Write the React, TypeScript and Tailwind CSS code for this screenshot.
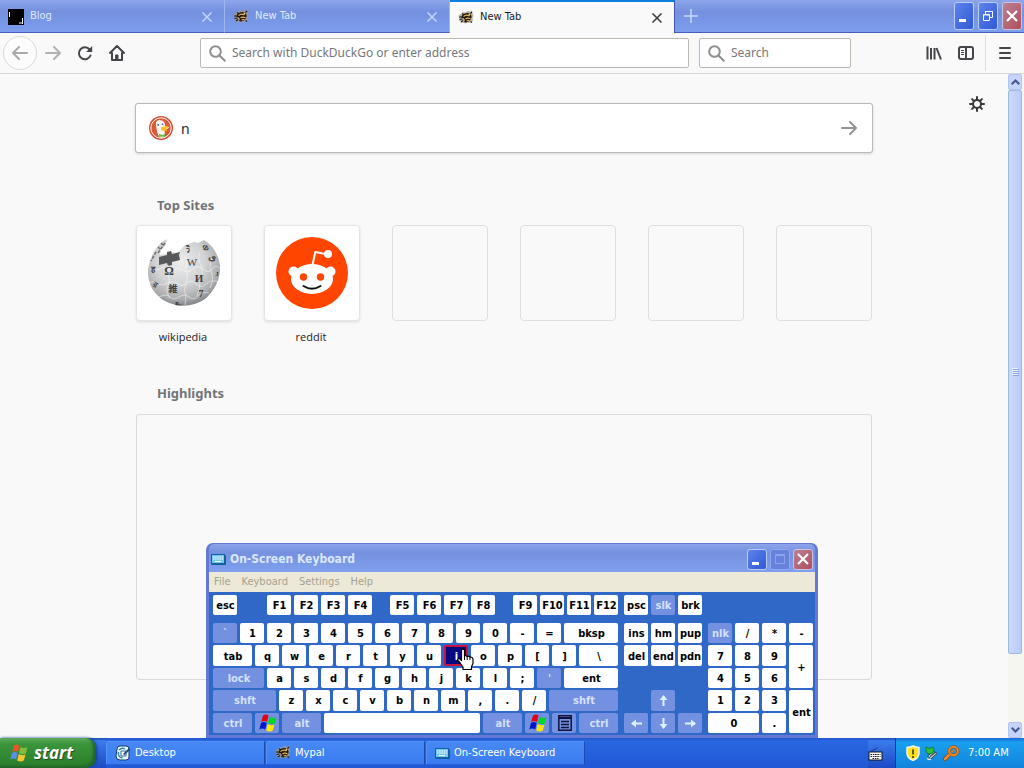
import React, { ReactNode } from "react";

const UI = "font-['DejaVu_Sans_Condensed','DejaVu_Sans',sans-serif]";

/* ---------- icons ---------- */

function BeeIcon() {
  return (
    <svg width="16" height="16" viewBox="0 0 16 16" className="shrink-0" aria-hidden="true">
      <path d="M.5 5l3-1 1-2 3 .5 2-1.500 3 .5 1.500-1 .5 3 1 2-1 3 .5 2.500-2 .5-1 1.500-2-.5-3 1-2-1-2.500.5.5-2-2-.5.5-2.500z" fill="#a39a88" opacity=".75" />
      <path d="M4 5.500q4-3.500 8-2 2.500 2.500 1 5.500-1.500 3-4.500 3.500L6 12q1.500-1.500.5-3-1-1.500-3-1z" fill="#21170c" />
      <path d="M5.500 6.500q3-2.500 6-.5M7.500 8.800q2.500-1.300 5 0M8.500 11q1.500-.8 3-.3" stroke="#e8b956" strokeWidth="1.200" fill="none" />
      <path d="M1 7h3M1.500 9.500l3-.5M3 12l2-1.500M4 3.500l2 1.500M12.500 11.500l1.500 1M12.500 3.500l1.500-1.500" stroke="#21170c" strokeWidth="1.100" />
      <circle cx="11.500" cy="4.500" r=".9" fill="#f2d58c" />
    </svg>
  );
}

function CloseX() {
  return (
    <svg width="10" height="10" viewBox="0 0 10 10" stroke="currentColor" strokeWidth="1.500" aria-hidden="true">
      <path d="M.5.5l9 9M9.500.5l-9 9" />
    </svg>
  );
}

function ArrowIcon({ flip = false }: { flip?: boolean }) {
  return (
    <svg width="16" height="14" viewBox="0 0 16 14" fill="none" stroke="currentColor" strokeWidth="2" strokeLinecap="round" strokeLinejoin="round" className={flip ? "rotate-180" : ""} aria-hidden="true">
      <path d="M1 7h14M9 1l6 6-6 6" />
    </svg>
  );
}

function ReloadIcon() {
  return (
    <svg width="16" height="16" viewBox="0 0 16 16" aria-hidden="true">
      <path d="M12.600 4.500A6 6 0 1 0 13.500 10.500" fill="none" stroke="#45454a" strokeWidth="2" strokeLinecap="round" />
      <path d="M15.200 1v6H9.200z" fill="#45454a" />
    </svg>
  );
}

function HomeIcon() {
  return (
    <svg width="16" height="16" viewBox="0 0 16 16" fill="none" stroke="#45454a" strokeWidth="2" strokeLinejoin="round" strokeLinecap="round" aria-hidden="true">
      <path d="M1 8l7-7 7 7M3 8v7h10V8" />
      <path d="M7 10h2v5H7z" fill="#45454a" strokeWidth="1" />
    </svg>
  );
}

function SearchIcon() {
  return (
    <svg width="17" height="17" viewBox="0 0 17 17" fill="none" stroke="#8f8f92" strokeWidth="2" strokeLinecap="round" className="shrink-0" aria-hidden="true">
      <circle cx="6.500" cy="6.500" r="5.300" />
      <path d="M10.500 10.500l5.300 5.300" />
    </svg>
  );
}

function LibraryIcon() {
  return (
    <svg width="16" height="16" viewBox="0 0 16 16" stroke="#45454a" strokeWidth="2" fill="none" aria-hidden="true">
      <path d="M1.500 1.500v13M5 3v11.500M8.500 3v11.500M10.500 3l4.500 11.500" />
    </svg>
  );
}

function SidebarIcon() {
  return (
    <svg width="16" height="14" viewBox="0 0 16 14" fill="none" stroke="#45454a" aria-hidden="true">
      <rect x="1" y="1" width="14" height="12" rx="2" strokeWidth="2" />
      <path d="M8 1v12" strokeWidth="2" />
      <path d="M3 4.500h3M3 6.500h3M3 8.500h3" />
    </svg>
  );
}

function GearIcon() {
  return (
    <svg width="16" height="16" viewBox="0 0 16 16" fill="none" stroke="#38383d" strokeWidth="2" strokeLinecap="round" aria-hidden="true">
      <circle cx="8" cy="8" r="4" />
      <path d="M8 1v3M8 12v3M1 8h3M12 8h3M3.100 3.100L5 5M11 11l1.900 1.900M12.900 3.100L11 5M5 11l-1.900 1.900" />
    </svg>
  );
}

function DuckLogo() {
  return (
    <svg width="24" height="24" viewBox="0 0 24 24" className="shrink-0" aria-hidden="true">
      <circle cx="12" cy="12" r="12" fill="#d8482c" />
      <circle cx="12" cy="12" r="10.200" fill="#de5833" stroke="#fff" strokeWidth="1" />
      <path d="M7 6q2-3 6-1.500q3.500 1.500 3 6q3 0 4.500.5q-2 2.500-5 3l.5 7q-4 1.500-6 0q-2-5-2.500-8Q6.500 9 7 6z" fill="#f5f3ea" />
      <path d="M12 11.500q4-2 8-.5q-1 1.500-4 2q3 .5 2 1.500q-3 1-6-.5z" fill="#fdc22c" />
      <path d="M10 18l3.500 1L16 18v3l-3-.5-3 .5z" fill="#65bc46" />
      <circle cx="9.200" cy="8.800" r=".9" fill="#2d4f8e" />
      <circle cx="13.600" cy="8.300" r=".8" fill="#2d4f8e" />
    </svg>
  );
}

function WikipediaGlobe() {
  return (
    <svg width="74" height="68" viewBox="0 0 74 68" aria-hidden="true">
      <defs>
        <radialGradient id="globe" cx=".45" cy=".35" r=".68">
          <stop offset="0" stopColor="#ececed" />
          <stop offset=".5" stopColor="#d2d3d4" />
          <stop offset=".82" stopColor="#a9abad" />
          <stop offset="1" stopColor="#75787b" />
        </radialGradient>
      </defs>
      <path d="M20 0l-2 7-4 4-1 5 5-1 5-2 8 1 2-3 5-5 9-3 4 1 6-3q13 8 16 25 1 20-15 34-20 13-42 1Q0 50 1 30 5 8 20 0z" fill="url(#globe)" />
      <path d="M12 18l8-2v-3l4-1 1 3 8-2-1 3 1 5-8 2v3l-4 1-1-3-8 2z" fill="#58595b" />
      <path d="M3 30q5 3 9 0t7 1q4 4 8 0 5-3 9 0 6 4 10-1t10 0 9 0 8-1M2 44q7-3 10 1 5 2 9-1 6-3 10 1 5 3 9-1t9 1 10 0 13-2M12 58q8-4 11 0t9 0 10 0 9-1 11-3M21 26q2 5-1 9 4 5 1 12-3 5 2 12M37 16q5 7 1 13 4 8 1 15-3 7 0 14l-1 8M53 13q-3 8 1 13 3 9-1 16 0 9-3 15M65 19q-4 8 0 15 2 8-2 15" fill="none" stroke="#fff" strokeWidth=".8" opacity=".6" />
      <path d="M18 4l-7 10M14 4l2 2M9 13l-5 9M11 8l2 2" stroke="#696b6e" strokeWidth="1.500" strokeDasharray="3 1.500" />
      <g fill="#3f4042" fontFamily="'Liberation Serif', 'Noto Sans CJK JP', serif" fontWeight="700" textAnchor="middle">
        <text x="22" y="36" fontSize="12">Ω</text>
        <text x="45" y="27" fontSize="11" fontWeight="400">W</text>
        <text x="52" y="43" fontSize="11">И</text>
        <text x="26" y="53" fontSize="9">維</text>
        <text x="54" y="58" fontSize="10">7</text>
        <text x="40" y="13" fontSize="8" transform="rotate(12 40 13)">วิ</text>
        <text x="57" y="11" fontSize="8" transform="rotate(35 57 11)">Ф</text>
        <text x="65" y="21" fontSize="10" transform="rotate(15 65 21)">ی</text>
        <text x="6" y="33" fontSize="8">ह</text>
        <text x="7" y="48" fontSize="8" transform="rotate(30 7 48)">র</text>
        <text x="70" y="37" fontSize="7">J</text>
        <text x="31" y="66" fontSize="7">உ</text>
      </g>
    </svg>
  );
}

function RedditLogo() {
  return (
    <svg width="72" height="72" viewBox="0 0 72 72" aria-hidden="true">
      <circle cx="36" cy="36" r="36" fill="#ff4500" />
      <circle cx="17.500" cy="34.500" r="5" fill="#fff" />
      <circle cx="54.500" cy="34.500" r="5" fill="#fff" />
      <ellipse cx="36" cy="42" rx="21" ry="15" fill="#fff" />
      <path d="M36.500 28l2.800-13 12 2.400" fill="none" stroke="#fff" strokeWidth="2" strokeLinejoin="round" />
      <circle cx="52" cy="17" r="4" fill="#fff" />
      <circle cx="27.500" cy="40" r="3.700" fill="#ff4500" />
      <circle cx="44.500" cy="40" r="3.700" fill="#ff4500" />
      <path d="M27.500 49q8.500 5.500 17 0" fill="none" stroke="#111" strokeWidth="2" strokeLinecap="round" />
    </svg>
  );
}

function WindowsFlag({ size, vivid = false }: { size: number; vivid?: boolean }) {
  const c = vivid ? ["#e60012", "#00d726", "#0018c8", "#ffe600"] : ["#e8562a", "#86bc3c", "#5b8ee8", "#f7c62f"];
  return (
    <svg width={size} height={size} viewBox="0 0 18 18" className="shrink-0" aria-hidden="true">
      <path d="M4 1.500Q7-.5 9.500 1.500L8 8Q5 6 2.200 8z" fill={c[0]} />
      <path d="M10.500 3Q14 5 17.500 3L15.800 9.500Q12.500 11 9 9z" fill={c[1]} />
      <path d="M2 9Q5 7 7.700 9L6.200 15.500Q3 13.500.3 15.500z" fill={c[2]} />
      <path d="M8.700 10Q12 12 15.500 10.500L13.800 16.500Q10.500 18.500 7.200 16.500z" fill={c[3]} />
    </svg>
  );
}

function KeyboardIcon() {
  return (
    <svg width="15" height="12" viewBox="0 0 15 12" className="shrink-0" aria-hidden="true">
      <path d="M0 1h14v1l1 1v9H1l-1-1z" fill="#12619e" />
      <rect x="1" y="2" width="12" height="8" fill="#72c8f4" />
      <path d="M2 4h10M2 6h10" stroke="#fff" strokeWidth="1.200" strokeDasharray="1.500 .7" />
      <path d="M4 8.500h6" stroke="#fff" />
    </svg>
  );
}

function TrayKeyboardIcon() {
  return (
    <svg width="15" height="14" viewBox="0 0 15 14" aria-hidden="true">
      <path d="M4 4.500q0-2 2-2t3-2" stroke="#101a50" fill="none" strokeDasharray="1.500 1" />
      <rect x="1" y="5" width="13" height="8" fill="#fff" stroke="#141414" />
      <path d="M2.500 7.500h10M2.500 9.500h10M4.500 11.500h6" stroke="#141414" strokeWidth="1.200" strokeDasharray="1.500 .8" />
    </svg>
  );
}

function DesktopIcon() {
  return (
    <svg width="16" height="16" viewBox="0 0 16 16" className="shrink-0" aria-hidden="true">
      <path d="M2 4q0-3 3-3h6q3 0 3 3v8q0 3-3 3H5q-4 0-4-4z" fill="#e9f5fb" stroke="#123c73" strokeWidth="1" />
      <path d="M4 5q3-3 6-1M3.500 7q-1 5 4 6" stroke="#2f86b8" strokeWidth="1.500" fill="none" />
      <path d="M6 6h5v5H6z" fill="#fff" stroke="#2b6f91" />
      <path d="M8 9l6-6 1.500 1.500-6 5.500z" fill="#1d4d75" />
    </svg>
  );
}

function ShieldIcon() {
  return (
    <svg width="14" height="16" viewBox="0 0 14 16" aria-hidden="true">
      <path d="M7 1q3 1.500 6 1.500V8q0 5-6 7.500Q1 13 1 8V2.500Q4 2.500 7 1z" fill="#ffdf20" stroke="#f5f5e4" strokeWidth="1.500" />
      <path d="M7 4.500v5M7 11v2" stroke="#3c3400" strokeWidth="1.600" />
    </svg>
  );
}

function RemoveHardwareIcon() {
  return (
    <svg width="15" height="16" viewBox="0 0 15 16" aria-hidden="true">
      <path d="M3.500 11l6-5 3.500 2.500-6 5.500z" fill="#b8c4c8" stroke="#2c4953" />
      <path d="M6 11.500l5-4" stroke="#35555f" strokeWidth="1.200" />
      <path d="M2 2l3 1.500L9 2l1 3-1 3-5 1-2-3z" fill="#2fbf3a" stroke="#0b6e1a" strokeWidth=".7" />
      <path d="M3 13.500q2 1.500 4 .5" stroke="#dfe8ea" strokeWidth="1.500" fill="none" />
    </svg>
  );
}

function MagnifierIcon() {
  return (
    <svg width="17" height="16" viewBox="0 0 17 16" fill="none" aria-hidden="true">
      <path d="M6.500 9.500L2 14" stroke="#8a4510" strokeWidth="4" strokeLinecap="round" />
      <path d="M6.500 9.500L2 14" stroke="#ef8b2c" strokeWidth="2.500" strokeLinecap="round" />
      <circle cx="10.500" cy="6" r="4.300" stroke="#8a4510" strokeWidth="3" />
      <circle cx="10.500" cy="6" r="4.300" stroke="#f08a28" strokeWidth="2" />
      <path d="M8.500 7.500l3-3" stroke="#d97a26" strokeWidth="1.500" />
    </svg>
  );
}

function HandCursor() {
  return (
    <svg width="19" height="23" viewBox="0 0 19 23" aria-hidden="true">
      <path d="M5.500 1.500q1.800-1.200 3 .5v6q1.500-1 2.600.4 1.500-.8 2.700.8 3-.5 3.200 2.300v4l-1.500 3v3H7v-2.500L4.500 15.500 1.500 12q.5-2 2.500-1l1.500 1.500z" fill="#fff" stroke="#000" strokeWidth="1.200" strokeLinejoin="round" />
      <path d="M8.500 8v4M11.200 8.500V12M13.900 9.500V12" stroke="#000" />
    </svg>
  );
}

/* ---------- window controls ---------- */

function Caption({ label, tone, children }: { label: string; tone: "blue" | "red" | "off"; children: ReactNode }) {
  const tones = {
    blue: "border-[#b9cdf5] bg-gradient-to-br from-[#5f83ea] to-[#2f58d6]",
    red: "border-[#c9c4e0] bg-gradient-to-br from-[#b98294] to-[#b04c5c]",
    off: "border-[#8fa9ee] bg-[#6682dc]",
  };
  return (
    <button aria-label={label} className={`flex items-center justify-center rounded-[3px] border ${tones[tone]}`}>
      {children}
    </button>
  );
}

const MinimizeGlyph = () => (
  <svg width="14" height="14" viewBox="0 0 14 14" aria-hidden="true"><path d="M2 11.500h7" stroke="#fff" strokeWidth="3" /></svg>
);
const CloseGlyph = () => (
  <svg width="14" height="14" viewBox="0 0 14 14" aria-hidden="true"><path d="M2 2l10 10M12 2L2 12" stroke="#fff" strokeWidth="2.200" /></svg>
);
const RestoreGlyph = () => (
  <svg width="12" height="12" viewBox="0 0 12 12" fill="none" stroke="#fff" aria-hidden="true">
    <path d="M3.500 4V1.500h7v6H8M3 1.500h8" /><path d="M1.500 4.500h6v6h-6z M1 5h7" />
  </svg>
);
const MaximizeGlyph = () => (
  <svg width="12" height="12" viewBox="0 0 12 12" fill="none" stroke="#8aa5ee" aria-hidden="true"><path d="M1.500 2.500h9v8h-9zM1 1.500h10" /></svg>
);

/* ---------- browser ---------- */

function Tab({ icon, title, active = false }: { icon: ReactNode; title: string; active?: boolean }) {
  return (
    <div
      className={`flex w-[225px] items-center border-r pl-2 pr-3 ${
        active ? "border-t-2 border-r-[#4058b0] border-t-[#0b7ee0] bg-[#f9f9fa] text-[#1a1a1e]" : "border-[#9db6f0] border-b border-b-[#4460bc] pt-px text-[#dfe9ff]"
      }`}
    >
      {icon}
      <span className="ml-1.5 flex-1 truncate text-[11px]">{title}</span>
      <button aria-label={`Close ${title}`} className={active ? "text-[#38383d]" : "text-[#c5d5fa]"}><CloseX /></button>
    </div>
  );
}

function Browser() {
  return (
    <div className="flex min-h-0 flex-1 flex-col">
      <div className="flex h-[33px] shrink-0 bg-gradient-to-b from-[#8ea6ea] via-[#7490df] via-35% to-[#7c9fee]">
        <Tab
          icon={
            <svg width="16" height="16" viewBox="0 0 16 16" aria-hidden="true">
              <path d="M0 0h16v16H0z" fill="#000" /><path d="M1.500 3v5M14.500 9v6M11 14h3" stroke="#fff" />
            </svg>
          }
          title="Blog"
        />
        <Tab icon={<BeeIcon />} title="New Tab" />
        <Tab icon={<BeeIcon />} title="New Tab" active />
        <div className="flex flex-1 items-center border-b border-[#4460bc] pl-2">
          <button aria-label="Open a new tab">
            <svg width="16" height="14" viewBox="0 0 16 14" stroke="#c9d8fb" strokeWidth="1.500" aria-hidden="true"><path d="M8 0v14M1 7h14" /></svg>
          </button>
        </div>
        <div className="grid grid-cols-[20px_20px_20px] gap-1 border-b border-[#4460bc] py-0.5 pr-0.5">
          <Caption label="Minimize" tone="blue"><MinimizeGlyph /></Caption>
          <Caption label="Restore" tone="blue"><RestoreGlyph /></Caption>
          <Caption label="Close" tone="red"><CloseGlyph /></Caption>
        </div>
      </div>

      <div className="flex h-[41px] shrink-0 items-center border-b border-[#d4d8d8] bg-[#f9f9fa]">
        <div className="flex w-[200px] items-center pl-[3px]">
          <button aria-label="Back" className="flex size-[34px] items-center justify-center rounded-full border border-[#d6dcd6] bg-[#fcfcfc] text-[#aaaaab]"><ArrowIcon flip /></button>
          <button aria-label="Forward" className="ml-2 text-[#b2b2b3]"><ArrowIcon /></button>
          <button aria-label="Reload" className="ml-4"><ReloadIcon /></button>
          <button aria-label="Home" className="ml-4"><HomeIcon /></button>
        </div>
        <label className="flex h-[30px] min-w-0 flex-1 items-center gap-1.5 rounded-[2px] border border-[#b9bab2] bg-white pl-2">
          <SearchIcon />
          <input aria-label="Address" placeholder="Search with DuckDuckGo or enter address" className="min-w-0 flex-1 bg-transparent font-['Noto_Sans',sans-serif] text-[12px] outline-none placeholder:text-[#77777a]" />
        </label>
        <label className="ml-2.5 flex h-[30px] w-[152px] items-center gap-1.5 rounded-[2px] border border-[#b9bab2] bg-white pl-2">
          <SearchIcon />
          <input aria-label="Web search" placeholder="Search" className="w-24 bg-transparent font-['Noto_Sans',sans-serif] text-[12px] outline-none placeholder:text-[#77777a]" />
        </label>
        <div className="flex w-[173px] items-center justify-end">
          <button aria-label="Library"><LibraryIcon /></button>
          <button aria-label="Sidebars" className="ml-4"><SidebarIcon /></button>
          <div className="ml-[11px] h-9 w-px bg-[#dddde0]" />
          <button aria-label="Menu" className="mx-3">
            <svg width="14" height="14" viewBox="0 0 14 14" stroke="#45454a" strokeWidth="2" strokeLinecap="round" aria-hidden="true"><path d="M2 2h10M2 7h10M2 12h10" /></svg>
          </button>
        </div>
      </div>

      <div className="flex min-h-0 flex-1">
        <NewTabPage />
        <ScrollBar />
      </div>
    </div>
  );
}

const sites: { name: string; logo: ReactNode }[] = [
  { name: "wikipedia", logo: <WikipediaGlobe /> },
  { name: "reddit", logo: <RedditLogo /> },
];

function NewTabPage() {
  return (
    <main className="relative flex min-w-0 flex-1 flex-col items-center overflow-hidden bg-[#f9f9fa] pt-[29px]">
      <button aria-label="Customize your New Tab page" className="absolute right-[23px] top-[22px]"><GearIcon /></button>
      <form className="flex h-[50px] w-[738px] shrink-0 items-center rounded-[3px] border border-[#b9b9bb] bg-white px-[13px] shadow-[0_1px_3px_rgba(0,0,0,0.15)]">
        <DuckLogo />
        <input aria-label="Search the Web" defaultValue="n" className="ml-2 min-w-0 flex-1 font-['Noto_Sans',sans-serif] text-[14px] text-[#2a2a2e] outline-none" />
        <button type="button" aria-label="Go" className="mr-0.5 text-[#949496]"><ArrowIcon /></button>
      </form>

      <div className="w-[736px]">
        <h2 className="mt-10 pl-[21px] font-['Noto_Sans',sans-serif] text-[13px] font-bold leading-6 text-[#737375]">Top Sites</h2>
        <ul className="mt-2 grid grid-cols-6 gap-8">
          {sites.map((s) => (
            <li key={s.name}>
              <a href="#" className="flex flex-col items-center">
                <span className="flex h-24 w-24 items-center justify-center rounded-[4px] border border-[#e6e6e7] bg-white shadow-[0_1px_3px_rgba(0,0,0,0.12)]">{s.logo}</span>
                <span className="mt-2 pr-0.5 font-['Open_Sans',sans-serif] text-[11px] leading-4 text-[#1c1c20]">{s.name}</span>
              </a>
            </li>
          ))}
          {[0, 1, 2, 3].map((n) => (
            <li key={n} className="h-24 rounded-[4px] border border-[#dededf]" />
          ))}
        </ul>
        <h2 className="mt-9 pl-[21px] font-['Noto_Sans',sans-serif] text-[13px] font-bold leading-6 text-[#737375]">Highlights</h2>
        <div className="mt-[9px] h-[266px] rounded-[3px] border border-[#dadadb]" />
      </div>
    </main>
  );
}

function ScrollButton({ up = false }: { up?: boolean }) {
  return (
    <button aria-label={up ? "Scroll up" : "Scroll down"} className="flex h-4 w-full items-center justify-center rounded-[2px] border border-[#b2c4ef] bg-[#c6d3fb]">
      <svg width="9" height="6" viewBox="0 0 9 6" fill="none" stroke="#44588f" strokeWidth="2" className={up ? "" : "rotate-180"} aria-hidden="true"><path d="M.7 5.300l3.800-3.800 3.800 3.800" /></svg>
    </button>
  );
}

function ScrollBar() {
  return (
    <div className="flex w-4 flex-col bg-[#f6f6f1] pr-[2px]">
      <ScrollButton up />
      <div className="flex h-[564px] max-h-full min-h-0 items-center justify-center rounded-[2px] border border-[#9fb8dd] bg-gradient-to-r from-[#cbd8fd] to-[#bccafa]">
        <svg width="7" height="8" viewBox="0 0 7 8" aria-hidden="true"><path d="M0 .5h6M0 2.500h6M0 4.500h6M0 6.500h6" stroke="#eef4fe" /><path d="M1 1.500h6M1 3.500h6M1 5.500h6M1 7.500h6" stroke="#8ba2d8" /></svg>
      </div>
      <div className="flex-1" />
      <ScrollButton />
    </div>
  );
}

/* ---------- on-screen keyboard ---------- */

type KeySpec = { t: ReactNode; n?: string; w?: string; mod?: boolean; hot?: boolean };

const W24 = "w-6";
const W39 = "w-[39px]";

function Key({ t, n, w = W24, mod = false, hot = false }: KeySpec) {
  const look = hot
    ? "border-2 border-[#c8143c] bg-[#0a0a80] text-white"
    : mod
      ? "bg-[#7391e0] text-[#d3e1fc]"
      : "bg-white text-black";
  return (
    <button aria-label={n} className={`flex shrink-0 items-center justify-center overflow-hidden rounded-[2px] pl-px pt-px text-[11px] font-bold leading-none ${w} ${look}`}>
      {t}
    </button>
  );
}

const chars = (s: string): KeySpec[] => s.split(" ").map((t) => ({ t }));
const flag = <WindowsFlag size={18} vivid />;
const contextMenu = (
  <svg width="14" height="16" viewBox="0 0 14 16" aria-hidden="true">
    <path d="M.8.8h12.400v14.400H.8z" fill="none" stroke="#10123c" strokeWidth="1.500" /><path d="M1 3h12" stroke="#10123c" strokeWidth="2" /><path d="M3 6.500h8M3 9.500h8M3 12.500h8" stroke="#10123c" strokeWidth="1.400" />
  </svg>
);

const mainRows: KeySpec[][] = [
  [{ t: "`", mod: true }, ...chars("1 2 3 4 5 6 7 8 9 0 - ="), { t: "bksp", w: "w-[54px]" }],
  [{ t: "tab", w: W39 }, ...chars("q w e r t y u"), { t: "i", hot: true }, ...chars("o p [ ]"), { t: "\\", w: W39 }],
  [{ t: "lock", w: "w-[51px]", mod: true }, ...chars("a s d f g h j k l ;"), { t: "'", mod: true }, { t: "ent", w: "w-[54px]" }],
  [{ t: "shft", w: "w-[63px]", mod: true }, ...chars("z x c v b n m , . /"), { t: "shft", w: "w-[69px]", mod: true }],
  [
    { t: "ctrl", w: W39, mod: true },
    { t: flag, n: "Left Windows key", mod: true },
    { t: "alt", w: W39, mod: true },
    { t: "", n: "Space", w: "w-[156px]" },
    { t: "alt", w: W39, mod: true },
    { t: flag, n: "Right Windows key", mod: true },
    { t: contextMenu, n: "Context menu", mod: true },
    { t: "ctrl", w: W39, mod: true },
  ],
];

function KeyArrow({ turn }: { turn: string }) {
  return (
    <svg width="13" height="13" viewBox="0 0 13 13" fill="none" stroke="#d9f0ff" strokeWidth="2" className={turn} aria-hidden="true"><path d="M6.500 12V2" /><path d="M6.500 1l4 5h-8z" fill="#d9f0ff" stroke="none" /></svg>
  );
}

const numpad: KeySpec[] = [
  { t: "nlk", mod: true }, { t: "/" }, { t: "*" }, { t: "-" },
  { t: "7" }, { t: "8" }, { t: "9" }, { t: "+", w: "row-span-2 pt-2.5" },
  { t: "4" }, { t: "5" }, { t: "6" },
  { t: "1" }, { t: "2" }, { t: "3" }, { t: "ent", w: "row-span-2 pt-2.5" },
  { t: "0", w: "col-span-2" }, { t: "." },
];

function KeyGroup({ keys }: { keys: KeySpec[] }) {
  return <div className="flex gap-[3px]">{keys.map((k, i) => <Key key={i} {...k} />)}</div>;
}

function OnScreenKeyboard() {
  return (
    <section aria-label="On-Screen Keyboard" className="absolute left-[206px] top-[543px] flex w-[612px] flex-col rounded-t-[7px] border-x-[3px] border-b-[3px] border-t border-[#6478d4] bg-[#3068c8]">
      <header className="flex h-7 items-center rounded-t-[5px] bg-gradient-to-b from-[#8da4ea] via-[#7490df] via-30% to-[#7fa0ee] pl-0.5 pt-0.5">
        <KeyboardIcon />
        <h1 className="ml-1 flex-1 text-[12px] font-bold text-[#dbe7ff]">On-Screen Keyboard</h1>
        <div className="grid h-[21px] grid-cols-[20px_20px_20px] gap-[3px] pr-0.5">
          <Caption label="Minimize keyboard" tone="blue"><MinimizeGlyph /></Caption>
          <Caption label="Maximize keyboard" tone="off"><MaximizeGlyph /></Caption>
          <Caption label="Close keyboard" tone="red"><CloseGlyph /></Caption>
        </div>
      </header>
      <nav className="flex h-5 items-center gap-[11px] bg-[#ece9d8] px-[5px] text-[11px] text-[#a5a290]">
        <button>File</button>
        <button>Keyboard</button>
        <button>Settings</button>
        <button>Help</button>
      </nav>
      <div className="flex flex-col gap-2 px-1 pb-0.5 pt-[3px]">
        <div className="flex h-5">
          <div className="flex w-[411px] gap-[18px]">
            <div className="flex gap-[30px]">
              <Key t="esc" />
              <KeyGroup keys={chars("F1 F2 F3 F4")} />
            </div>
            <KeyGroup keys={chars("F5 F6 F7 F8")} />
            <KeyGroup keys={chars("F9 F10 F11 F12")} />
          </div>
          <KeyGroup keys={[{ t: "psc" }, { t: "slk", mod: true }, { t: "brk" }]} />
        </div>
        <div className="flex h-[110px] gap-1.5">
          <div className="grid grid-rows-5 gap-0.5">
            {mainRows.map((r, i) => <KeyGroup key={i} keys={r} />)}
          </div>
          <div className="grid grid-cols-[24px_24px_24px] grid-rows-5 gap-x-[3px] gap-y-0.5">
            {["ins", "hm", "pup", "del", "end", "pdn"].map((t) => <Key key={t} t={t} />)}
            <span className="col-span-3" />
            <span />
            <Key t={<KeyArrow turn="" />} n="Up" mod />
            <span />
            <Key t={<KeyArrow turn="-rotate-90" />} n="Left" mod />
            <Key t={<KeyArrow turn="rotate-180" />} n="Down" mod />
            <Key t={<KeyArrow turn="rotate-90" />} n="Right" mod />
          </div>
          <div className="grid grid-cols-[24px_24px_24px_24px] grid-rows-5 gap-x-[3px] gap-y-0.5">
            {numpad.map((k, i) => <Key key={i} w="" {...k} />)}
          </div>
        </div>
      </div>
      <div className="pointer-events-none absolute left-[247px] top-[104px]"><HandCursor /></div>
    </section>
  );
}

/* ---------- taskbar ---------- */

function TaskButton({ icon, title }: { icon: ReactNode; title: string }) {
  return (
    <button className="flex w-[159px] items-center gap-1 rounded-[2px] border border-[#5592f6] border-b-[#2c62d8] border-r-[#1d49b4] bg-gradient-to-b from-[#4788f5] to-[#3a7cf0] pl-2 text-[11px] text-white">
      {icon}
      <span className="truncate">{title}</span>
    </button>
  );
}

function Taskbar() {
  return (
    <footer className="relative z-10 flex h-[30px] shrink-0 bg-gradient-to-b from-[#1f49b0] via-[#3a7bee] via-10% to-[#1c49c4]">
      <button className="flex w-24 items-center gap-1.5 rounded-r-[10px] bg-gradient-to-b from-[#5cab5c] via-[#3a953a] via-20% to-[#2a7d2c] pl-2.5 font-['Open_Sans','Noto_Sans',sans-serif] text-[17px] font-bold italic text-white shadow-[inset_-3px_-2px_3px_#20642a,1px_0_3px_#123c90] [text-shadow:1px_1px_1px_#1f4d20]">
        <WindowsFlag size={18} />
        start
      </button>
      <div className="ml-2.5 flex flex-1 gap-px bg-[#245edc]/70 pb-[3px] pt-[3px]">
        <TaskButton icon={<DesktopIcon />} title="Desktop" />
        <TaskButton icon={<BeeIcon />} title="Mypal" />
        <TaskButton icon={<KeyboardIcon />} title="On-Screen Keyboard" />
      </div>
      <button aria-label="Language bar" className="mr-3 pt-0.5"><TrayKeyboardIcon /></button>
      <div className="flex w-[129px] items-center gap-1 border-l border-[#0f3c9c] bg-gradient-to-b from-[#1a6bd6] via-[#19a0f0] via-15% to-[#1383dc] pl-2.5 text-[11px] text-white">
        <ShieldIcon />
        <RemoveHardwareIcon />
        <MagnifierIcon />
        <time className="ml-1">7:00 AM</time>
      </div>
    </footer>
  );
}

export default function App() {
  return (
    <div className={`relative flex h-screen w-full flex-col overflow-hidden ${UI}`}>
      <Browser />
      <OnScreenKeyboard />
      <Taskbar />
    </div>
  );
}
